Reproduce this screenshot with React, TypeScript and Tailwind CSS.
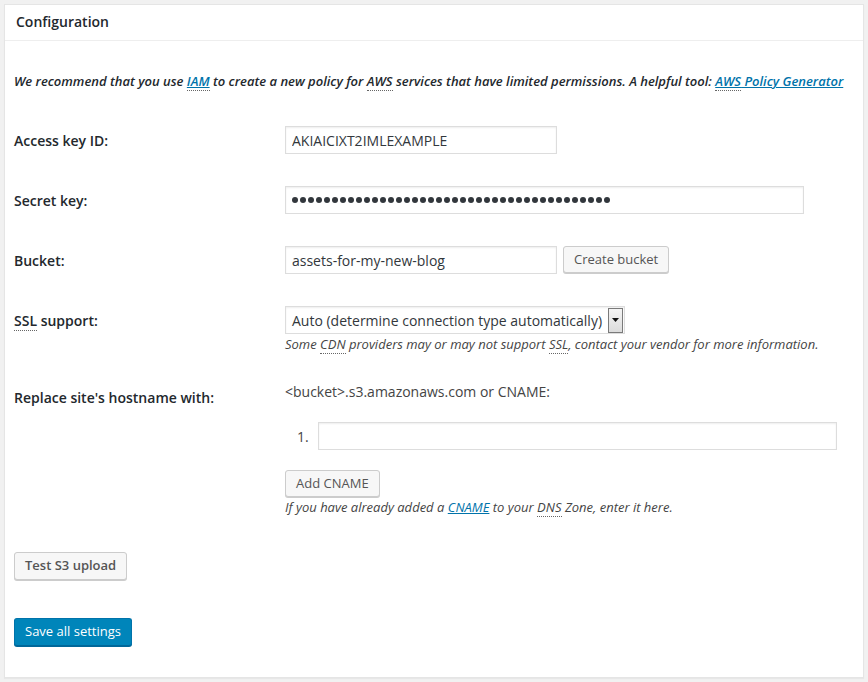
import type React from "react";

const FONT = { fontFamily: '"Open Sans", "Noto Sans", sans-serif' };

const Abbr: React.FC<{ children: React.ReactNode }> = ({ children }) => (
  <abbr className="no-underline border-b border-dotted border-[#666]">{children}</abbr>
);

const Link: React.FC<{ children: React.ReactNode }> = ({ children }) => (
  <a href="#" className="text-[#0073aa] underline">
    {children}
  </a>
);

const inputCls =
  "h-[28px] border border-[#ddd] bg-white px-[6px] text-[14px] text-[#32373c] shadow-[inset_0_1px_2px_rgba(0,0,0,0.07)] outline-none";

const buttonCls =
  "h-[27px] rounded-[3px] border border-[#ccc] bg-[#f7f7f7] px-[10px] text-[13px] text-[#555] shadow-[0_1px_0_#ccc]";

const SECRET_LENGTH = 40;

const Label: React.FC<{ children: React.ReactNode }> = ({ children }) => (
  <div className="flex h-[28px] w-[271px] shrink-0 items-center text-[14px] font-semibold text-[#23282d]">
    {children}
  </div>
);

export default function App() {
  return (
    <div className="min-h-[682px] bg-[#f1f1f1] px-[4px] pt-[4px] pb-[4px]" style={FONT}>
      <div className="h-[674px] border border-[#e5e5e5] bg-white shadow-[0_1px_1px_rgba(0,0,0,0.04)]">
        <div className="flex h-[36px] items-center border-b border-[#eee] px-[11px] pb-[2px] text-[14px] font-semibold text-[#23282d]">
          Configuration
        </div>

        <div className="px-[9px]">
          <p className="mt-[31px] text-[13px] font-semibold italic leading-[19px] text-[#23282d]">
            We recommend that you use{" "}
            <Link>
              <Abbr>IAM</Abbr>
            </Link>{" "}
            to create a new policy for <Abbr>AWS</Abbr> services that have limited
            permissions. A helpful tool:{" "}
            <Link>
              <Abbr>AWS</Abbr> Policy Generator
            </Link>
          </p>

          <div className="mt-[35px] flex">
            <Label>Access key ID:</Label>
            <input className={`${inputCls} w-[272px]`} defaultValue="AKIAICIXT2IMLEXAMPLE" />
          </div>

          <div className="mt-[32px] flex">
            <Label>Secret key:</Label>
            <div className={`${inputCls} flex w-[519px] items-center gap-[2px]`}>
              {Array.from({ length: SECRET_LENGTH }).map((_, i) => (
                <span key={i} className="h-[6px] w-[6px] rounded-full bg-[#32373c]" />
              ))}
            </div>
          </div>

          <div className="mt-[32px] flex">
            <Label>Bucket:</Label>
            <input className={`${inputCls} w-[272px]`} defaultValue="assets-for-my-new-blog" />
            <button className={`${buttonCls} ml-[6px]`}>Create bucket</button>
          </div>

          <div className="mt-[32px] flex">
            <Label>
              <span>
                <Abbr>SSL</Abbr> support:
              </span>
            </Label>
            <div>
              <div className="flex h-[28px] w-[340px] items-center border border-[#ddd] bg-white pl-[6px] pr-[1px] text-[14px] text-[#32373c] shadow-[inset_0_1px_2px_rgba(0,0,0,0.07)]">
                <span className="flex-1">Auto (determine connection type automatically)</span>
                <span className="flex h-[25px] w-[15px] items-center justify-center border border-[#7a7a7a] bg-gradient-to-b from-[#f4f4f4] to-[#dcdcdc]">
                  <svg width="7" height="4" viewBox="0 0 7 4">
                    <path d="M0 0h7L3.5 4z" fill="#111" />
                  </svg>
                </span>
              </div>
              <p className="mt-[1px] text-[13px] italic leading-[18px] text-[#444]">
                Some <Abbr>CDN</Abbr> providers may or may not support <Abbr>SSL</Abbr>,
                contact your vendor for more information.
              </p>
            </div>
          </div>

          <div className="mt-[29px] flex">
            <div className="w-[271px] shrink-0 pt-[6px] text-[14px] font-semibold leading-[20px] text-[#23282d]">
              Replace site's hostname with:
            </div>
            <div>
              <div className="text-[14px] leading-[20px] text-[#444]">
                &lt;bucket&gt;.s3.amazonaws.com or CNAME:
              </div>
              <div className="mt-[20px] flex items-center">
                <span className="w-[33px] pl-[12px] text-[14px] text-[#444]">1.</span>
                <input className={`${inputCls} w-[519px]`} />
              </div>
              <button className={`${buttonCls} mt-[20px]`}>Add CNAME</button>
              <p className="mt-[1px] text-[13px] italic leading-[18px] text-[#444]">
                If you have already added a{" "}
                <Link>CNAME</Link> to your <Abbr>DNS</Abbr> Zone, enter it here.
              </p>
            </div>
          </div>

          <button className={`${buttonCls} mt-[36px] h-[28px] font-semibold`}>Test S3 upload</button>

          <div>
            <button className="mt-[38px] h-[28px] rounded-[3px] border border-[#0073aa] border-b-[#006799] bg-[#0085ba] px-[10px] text-[13px] text-white shadow-[0_1px_0_#006799]">
              Save all settings
            </button>
          </div>
        </div>
      </div>
    </div>
  );
}
